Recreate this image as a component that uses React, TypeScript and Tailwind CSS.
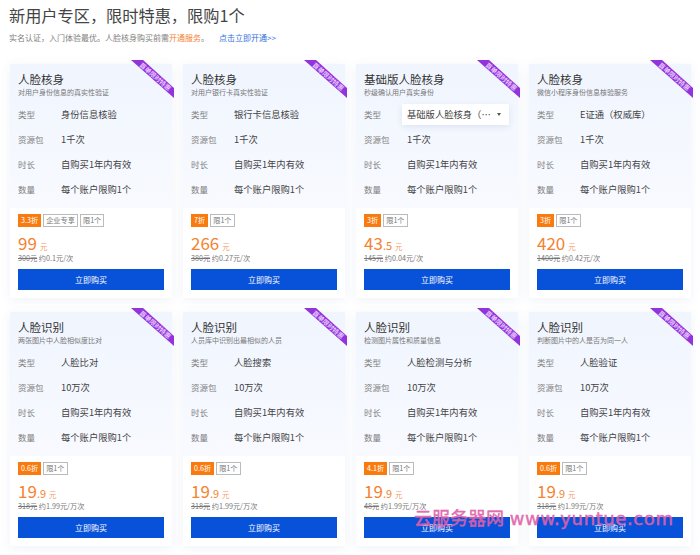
interface Plan {
  title: string;
  desc: string;
  type: string;
  pack: string;
  tags: string[];
  discount: string;
  price: string;
  cents?: string;
  old: string;
  unit: string;
  select?: boolean;
}

const PLANS: Plan[] = [
  { title: "人脸核身", desc: "对用户身份信息的真实性验证", type: "身份信息核验", pack: "1千次", discount: "3.3折", tags: ["企业专享", "限1个"], price: "99", old: "300元", unit: "约0.1元/次" },
  { title: "人脸核身", desc: "对用户银行卡真实性验证", type: "银行卡信息核验", pack: "1千次", discount: "7折", tags: ["限1个"], price: "266", old: "380元", unit: "约0.27元/次" },
  { title: "基础版人脸核身", desc: "秒级确认用户真实身份", type: "基础版人脸核身（…", pack: "1千次", discount: "3折", tags: ["限1个"], price: "43", cents: ".5", old: "145元", unit: "约0.04元/次", select: true },
  { title: "人脸核身", desc: "微信小程序身份信息核验服务", type: "E证通（权威库）", pack: "1千次", discount: "3折", tags: ["限1个"], price: "420", old: "1400元", unit: "约0.42元/次" },
  { title: "人脸识别", desc: "两张图片中人脸相似度比对", type: "人脸比对", pack: "10万次", discount: "0.6折", tags: ["限1个"], price: "19", cents: ".9", old: "318元", unit: "约1.99元/万次" },
  { title: "人脸识别", desc: "人员库中识别出最相似的人员", type: "人脸搜索", pack: "10万次", discount: "0.6折", tags: ["限1个"], price: "19", cents: ".9", old: "318元", unit: "约1.99元/万次" },
  { title: "人脸识别", desc: "检测图片属性和质量信息", type: "人脸检测与分析", pack: "10万次", discount: "4.1折", tags: ["限1个"], price: "19", cents: ".9", old: "48元", unit: "约1.99元/万次" },
  { title: "人脸识别", desc: "判断图片中的人是否为同一人", type: "人脸验证", pack: "10万次", discount: "0.6折", tags: ["限1个"], price: "19", cents: ".9", old: "318元", unit: "约1.99元/万次" },
];

function Ribbon() {
  return (
    <svg className="absolute right-[-3px] top-[-4px]" width="44" height="40" viewBox="0 0 44 40">
      <polygon points="0,0 12,0 43,28 43,38" fill="#9333dc" />
      <text
        x="24"
        y="19"
        fill="#f0dcff"
        fontSize="6.5"
        fontWeight="500"
        textAnchor="middle"
        transform="rotate(41 24 17)"
      >
        首单限时特惠
      </text>
    </svg>
  );
}

function Row({ label, children }: { label: string; children: React.ReactNode }) {
  return (
    <div className="flex h-[25px] items-center">
      <span className="w-[43px] shrink-0 text-[8.5px] text-[#808080]">{label}</span>
      {children}
    </div>
  );
}

function PlanCard({ plan }: { plan: Plan }) {
  return (
    <div className="relative flex h-[234px] flex-col bg-white shadow-[0_2px_10px_rgba(60,90,160,0.08)]">
      <Ribbon />
      <div className="h-[144px] bg-gradient-to-b from-[#f0f5fe] to-[#f8faff] px-[8px] pt-[7px]">
        <div className="text-[11.5px] leading-[16px] text-[#333]">{plan.title}</div>
        <div className="mb-[5px] text-[7px] leading-[10px] text-[#777]">{plan.desc}</div>
        <Row label="类型">
          {plan.select ? (
            <div className="ml-[-5px] flex h-[21px] w-[107px] items-center justify-between bg-white pl-[5px] pr-[8px] text-[9.3px] text-[#444] shadow-[0_2px_6px_rgba(60,90,160,0.12)]">
              <span className="whitespace-nowrap">{plan.type}</span>
              <span className="h-0 w-0 border-x-[2.5px] border-t-[3px] border-x-transparent border-t-[#555]" />
            </div>
          ) : (
            <span className="text-[9.3px] text-[#444]">{plan.type}</span>
          )}
        </Row>
        <Row label="资源包">
          <span className="text-[9.3px] text-[#444]">{plan.pack}</span>
        </Row>
        <Row label="时长">
          <span className="text-[9.3px] text-[#444]">自购买1年内有效</span>
        </Row>
        <Row label="数量">
          <span className="text-[9.3px] text-[#444]">每个账户限购1个</span>
        </Row>
      </div>
      <div className="px-[8px] pt-[6px]">
        <div className="flex h-[13px] gap-[2px]">
          <span className="flex items-center bg-[#f97b0f] px-[3px] text-[7.2px] text-white">{plan.discount}</span>
          {plan.tags.map((tag) => (
            <span key={tag} className="flex items-center border border-[#bbb] px-[2px] text-[7.2px] text-[#777]">
              {tag}
            </span>
          ))}
        </div>
        <div className="mt-[3px] flex h-[22px] items-baseline text-[#f58231]">
          <span className="text-[17px]">{plan.price}</span>
          {plan.cents && <span className="text-[11px]">{plan.cents}</span>}
          <span className="ml-[3px] text-[7.5px] text-[#f5a06a]">元</span>
        </div>
        <div className="mt-[1px] text-[7.2px] leading-[10px] text-[#777]">
          <span className="line-through">{plan.old}</span> {plan.unit}
        </div>
        <button className="mt-[6px] h-[21px] w-full bg-[#0852d9] text-[8px] text-white">立即购买</button>
      </div>
    </div>
  );
}

export default function App() {
  return (
    <div className="relative h-[555px] w-[700px] overflow-hidden bg-white pl-[10px] pr-[9px] font-['Noto_Sans_CJK_SC','Liberation_Sans',sans-serif]">
      <h1 className="ml-[-1px] pt-[3px] text-[16.2px] leading-[24px] text-[#444]">新用户专区，限时特惠，限购1个</h1>
      <p className="mt-[5px] ml-[-1px] text-[8px] leading-[12px] text-[#808080]">
        实名认证，入门体验最优。人脸核身购买前需<span className="text-[#f58231]">开通服务</span>。
        <span className="ml-[10px] text-[#2f6fdb]">点击立即开通&gt;&gt;</span>
      </p>
      <div className="mt-[20px] grid grid-cols-4 gap-x-[11px] gap-y-[14px]">
        {PLANS.map((plan, i) => (
          <PlanCard key={i} plan={plan} />
        ))}
      </div>
      <div className="absolute left-[414px] top-[507px] whitespace-nowrap font-['DejaVu_Sans','Noto_Sans_CJK_SC',sans-serif] text-[18px] leading-[24px] text-[#e060a8]/90 [-webkit-text-stroke:0.4px_#e060a8]">
        云服务器网 <span className="tracking-[0.6px]">www.yuntue.com</span>
      </div>
    </div>
  );
}
